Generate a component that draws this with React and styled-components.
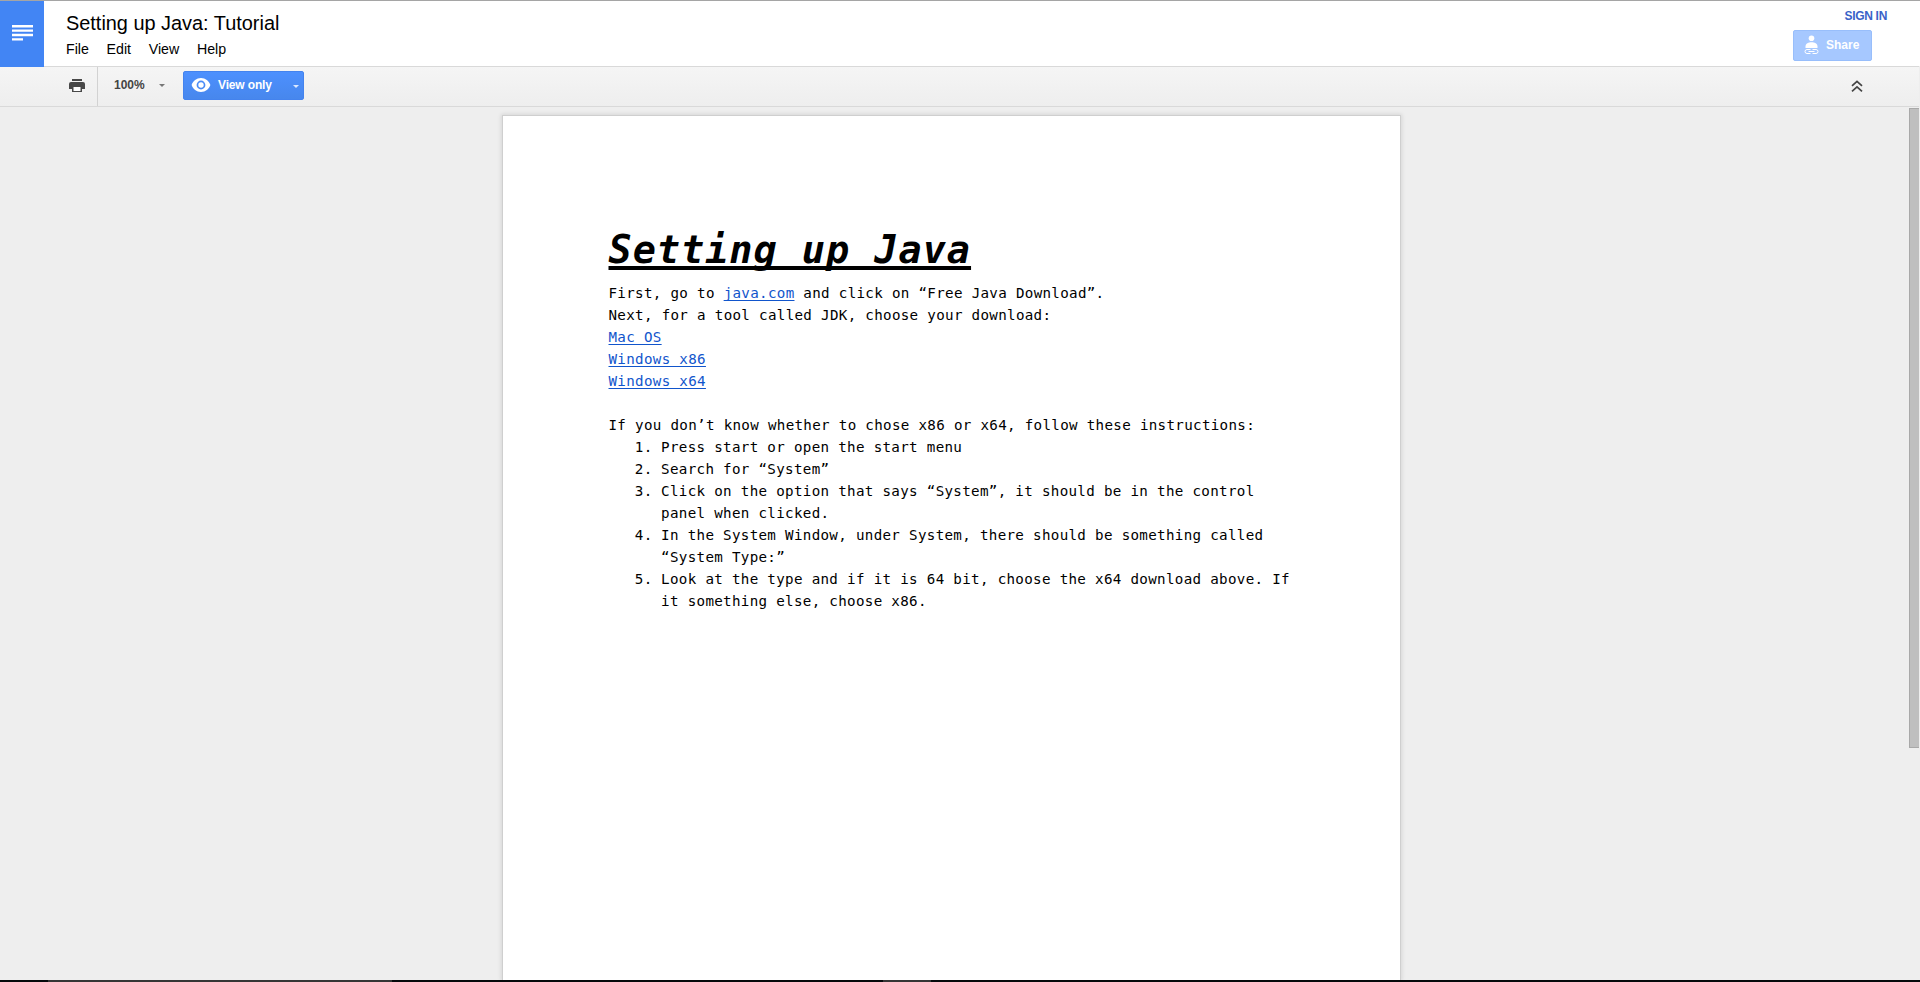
import React from "react";
import styled, { createGlobalStyle } from "styled-components";

const Global = createGlobalStyle`
  html, body, #root { margin: 0; height: 100%; }
  body { overflow: hidden; background: #eee; font-family: "Liberation Sans", Arial, sans-serif; }
`;

const Shell = styled.div`
  position: relative;
  display: flex;
  flex-direction: column;
  box-sizing: border-box;
  height: 982px;
  width: 1920px;
  border-top: 1px solid #a5a5a5;
  overflow: hidden;
`;

const Header = styled.header`
  display: flex;
  height: 65px;
  background: #fff;
  flex-shrink: 0;
`;

const Logo = styled.div`
  width: 44px;
  height: 66px;
  background: #4285f4;
  display: flex;
  justify-content: center;
  z-index: 1;
  svg { margin-top: 23px; width: 22px; height: 18px; }
`;

const Heading = styled.div`
  flex: 1;
  padding: 11px 0 0 22px;
`;

const DocName = styled.div`
  font-size: 19.9px;
  line-height: 22px;
  color: #000;
`;

const Menu = styled.nav`
  display: flex;
  gap: 17.7px;
  margin-top: 7px;
  font-size: 14.2px;
  line-height: 17px;
  color: #000;
`;

const Account = styled.div`
  display: flex;
  flex-direction: column;
  align-items: flex-end;
  padding: 8px 33px 0 0;
`;

const SignIn = styled.a`
  font-size: 12px;
  line-height: 14px;
  letter-spacing: -0.3px;
  font-weight: bold;
  color: #3a62c8;
`;

const ShareButton = styled.button`
  display: flex;
  align-items: center;
  gap: 7px;
  box-sizing: border-box;
  width: 79px;
  height: 31px;
  margin: 7px 15px 0 0;
  padding: 0 0 2px 10px;
  border: 1px solid #98befb;
  border-radius: 2px;
  background: #a6c8ff;
  color: #fff;
  font: bold 12px "Liberation Sans", Arial, sans-serif;
`;

const Toolbar = styled.div`
  display: flex;
  box-sizing: border-box;
  height: 41px;
  width: 1919px;
  border-top: 1px solid #d9d9d9;
  border-bottom: 1px solid #d9d9d9;
  background: linear-gradient(#f5f5f5, #eeeeee);
  flex-shrink: 0;
`;

const PrintTool = styled.div`
  width: 97px;
  border-right: 1px solid #d2d2d2;
  svg { display: block; margin: 10px 0 0 67px; }
`;

const ZoomTool = styled.div`
  display: flex;
  align-items: center;
  width: 69px;
  height: 35px;
  padding-left: 16px;
  font-size: 12px;
  font-weight: bold;
  color: #444;
`;

const Caret = styled.i`
  border: 3px solid transparent;
  border-bottom: 0;
  border-top-color: ${(p) => p.$color};
  margin: 2px 0 0 ${(p) => p.$gap}px;
`;

const ViewMode = styled.div`
  display: flex;
  align-items: center;
  box-sizing: border-box;
  width: 121px;
  height: 29px;
  margin-top: 4px;
  padding: 0 0 1px 7px;
  border: 1px solid #4483ee;
  border-radius: 2px;
  background: linear-gradient(#4d90fe, #4787ed);
  color: #fff;
  font-size: 12px;
  font-weight: bold;
  letter-spacing: -0.15px;
  svg { margin-right: 7px; }
`;

const Collapse = styled.div`
  margin: 12px 56px 0 auto;
`;

const Workspace = styled.main`
  display: flex;
  justify-content: space-between;
  flex: 1;
  min-height: 0;
  width: 1919px;
  background: #eee;
`;

const Page = styled.article`
  box-sizing: border-box;
  width: 899px;
  margin: 8px 0 0 502px;
  padding: 105px 105px 0 105.5px;
  border: 1px solid #cfcfcf;
  border-bottom: 0;
  background: #fff;
  box-shadow: 0 0 4px 1px rgba(0, 0, 0, 0.1);
  color: #000;
  font-family: Consolas, "DejaVu Sans Mono", monospace;
  font-size: 14.2px;
  letter-spacing: 0.315px;
  line-height: 22px;
`;

const Title = styled.h1`
  margin: 0 0 3px;
  font-size: 38.5px;
  letter-spacing: 0.99px;
  line-height: 58px;
  font-style: italic;
  text-decoration: underline;
  text-decoration-thickness: 4px;
  text-underline-offset: 3px;
  text-decoration-skip-ink: none;
`;

const Line = styled.p`
  margin: 0;
  min-height: 22px;
  white-space: nowrap;
`;

const Link = styled.a`
  color: #1155cc;
  text-decoration: underline;
  text-decoration-thickness: 1px;
  text-underline-offset: 2px;
  text-decoration-skip-ink: none;
`;

const Steps = styled.ol`
  margin: 0;
  padding: 0;
  list-style: none;
`;

const Step = styled.li`
  display: grid;
  grid-template-columns: 26.3px 1fr;
  padding-left: 26.3px;
  white-space: pre;
`;

const ScrollThumb = styled.div`
  box-sizing: border-box;
  width: 10px;
  height: 640px;
  margin-top: 1px;
  border: 1px solid #a8a8a8;
  border-right: 0;
  background: #bfbfbf;
`;

const Taskbar = styled.footer`
  display: flex;
  height: 2px;
  flex-shrink: 0;
  background: #05090b;
`;

const TaskItem = styled.span`
  width: ${(p) => p.$width}px;
  margin-left: ${(p) => p.$gap}px;
  background: #353535;
`;

const steps = [
  "Press start or open the start menu",
  "Search for “System”",
  "Click on the option that says “System”, it should be in the control\npanel when clicked.",
  "In the System Window, under System, there should be something called\n“System Type:”",
  "Look at the type and if it is 64 bit, choose the x64 download above. If\nit something else, choose x86.",
];

export default function App() {
  return (
    <Shell>
      <Global />
      <Header>
        <Logo>
          <svg viewBox="0 0 22 18" fill="#fff">
            <path d="M1 1h21v2.400H1zM1 5.400h21v2.400H1zM1 9.800h21v2.400H1zM1 14.200h11v2.400H1z" />
          </svg>
        </Logo>
        <Heading>
          <DocName>Setting up Java: Tutorial</DocName>
          <Menu>
            {["File", "Edit", "View", "Help"].map((m) => <span key={m}>{m}</span>)}
          </Menu>
        </Heading>
        <Account>
          <SignIn>SIGN IN</SignIn>
          <ShareButton>
            <svg width="15" height="20" viewBox="0 0 15 20" fill="#fff">
              <circle cx="7.500" cy="3.200" r="2.800" />
              <path d="M1.500 13V11.500c0-3 3-4.300 6-4.300s6 1.300 6 4.300V13z" />
              <path d="M6.500 14.500H3a2 2 0 0 0 0 4h3.500M8.500 14.500H12a2 2 0 0 1 0 4H8.500M4.500 16.500h6" fill="none" stroke="#fff" strokeWidth="1" />
            </svg>
            Share
          </ShareButton>
        </Account>
      </Header>
      <Toolbar>
        <PrintTool>
          <svg width="20" height="18" viewBox="0 0 20 18" fill="#484848">
            <path d="M5 2h10v2H5zM4 5h12a2 2 0 0 1 2 2v5h-3v3H5v-3H2V7a2 2 0 0 1 2-2z" />
            <path d="M6.500 10h7v4h-7z" fill="#fff" />
          </svg>
        </PrintTool>
        <ZoomTool>100%<Caret $color="#777" $gap={14} /></ZoomTool>
        <ViewMode>
          <svg width="20" height="16" viewBox="0 0 20 16" fill="#fff">
            <path fillRule="evenodd" d="M10 1C5.500 1 2 4 .6 8 2 12 5.500 15 10 15s8-3 9.400-7C18 4 14.500 1 10 1zm0 2.600a4.400 4.400 0 1 1 0 8.800 4.400 4.400 0 0 1 0-8.800z" />
            <circle cx="10" cy="8" r="2.700" />
          </svg>
          View only<Caret $color="#dbe8ff" $gap={21} />
        </ViewMode>
        <Collapse>
          <svg width="12" height="13" viewBox="0 0 12 13" fill="none" stroke="#444" strokeWidth="1.700">
            <path d="M1 5.800l5-4.500 5 4.500M1 11.300l5-4.500 5 4.500" />
          </svg>
        </Collapse>
      </Toolbar>
      <Workspace>
        <Page>
          <Title>Setting up Java</Title>
          <Line>First, go to <Link>java.com</Link> and click on “Free Java Download”.</Line>
          <Line>Next, for a tool called JDK, choose your download:</Line>
          <Line><Link>Mac OS</Link></Line>
          <Line><Link>Windows x86</Link></Line>
          <Line><Link>Windows x64</Link></Line>
          <Line />
          <Line>If you don’t know whether to chose x86 or x64, follow these instructions:</Line>
          <Steps>
            {steps.map((s, i) => (
              <Step key={i}><span>{i + 1}.</span><span>{s}</span></Step>
            ))}
          </Steps>
        </Page>
        <ScrollThumb />
      </Workspace>
      <Taskbar>
        <TaskItem $gap={48} $width={344} />
        <TaskItem $gap={491} $width={48} />
      </Taskbar>
    </Shell>
  );
}
